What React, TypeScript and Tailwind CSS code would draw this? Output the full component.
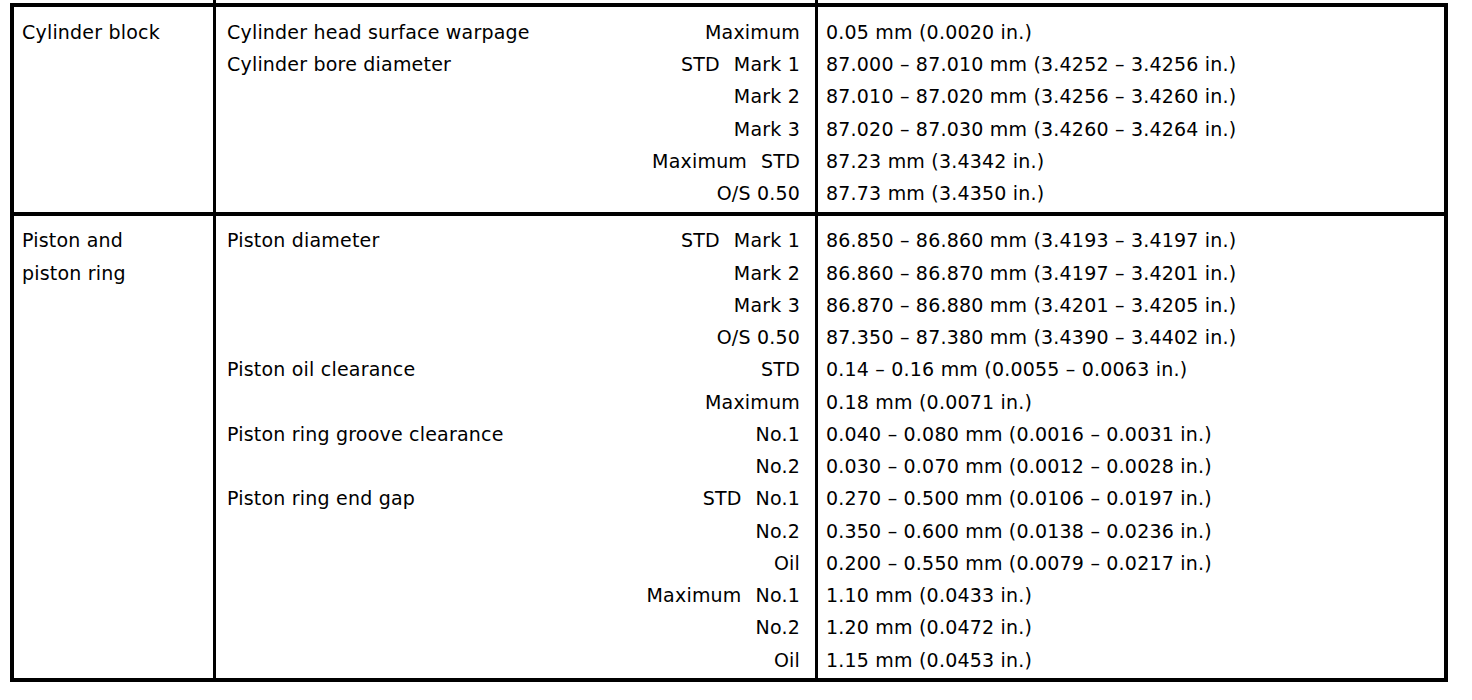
type Row = { item?: string; q: string[]; value: string }

const cylinder: Row[] = [
  { item: 'Cylinder head surface warpage', q: ['Maximum'], value: '0.05 mm (0.0020 in.)' },
  { item: 'Cylinder bore diameter', q: ['STD', 'Mark 1'], value: '87.000 – 87.010 mm (3.4252 – 3.4256 in.)' },
  { q: ['Mark 2'], value: '87.010 – 87.020 mm (3.4256 – 3.4260 in.)' },
  { q: ['Mark 3'], value: '87.020 – 87.030 mm (3.4260 – 3.4264 in.)' },
  { q: ['Maximum', 'STD'], value: '87.23 mm (3.4342 in.)' },
  { q: ['O/S 0.50'], value: '87.73 mm (3.4350 in.)' },
]

const piston: Row[] = [
  { item: 'Piston diameter', q: ['STD', 'Mark 1'], value: '86.850 – 86.860 mm (3.4193 – 3.4197 in.)' },
  { q: ['Mark 2'], value: '86.860 – 86.870 mm (3.4197 – 3.4201 in.)' },
  { q: ['Mark 3'], value: '86.870 – 86.880 mm (3.4201 – 3.4205 in.)' },
  { q: ['O/S 0.50'], value: '87.350 – 87.380 mm (3.4390 – 3.4402 in.)' },
  { item: 'Piston oil clearance', q: ['STD'], value: '0.14 – 0.16 mm (0.0055 – 0.0063 in.)' },
  { q: ['Maximum'], value: '0.18 mm (0.0071 in.)' },
  { item: 'Piston ring groove clearance', q: ['No.1'], value: '0.040 – 0.080 mm (0.0016 – 0.0031 in.)' },
  { q: ['No.2'], value: '0.030 – 0.070 mm (0.0012 – 0.0028 in.)' },
  { item: 'Piston ring end gap', q: ['STD', 'No.1'], value: '0.270 – 0.500 mm (0.0106 – 0.0197 in.)' },
  { q: ['No.2'], value: '0.350 – 0.600 mm (0.0138 – 0.0236 in.)' },
  { q: ['Oil'], value: '0.200 – 0.550 mm (0.0079 – 0.0217 in.)' },
  { q: ['Maximum', 'No.1'], value: '1.10 mm (0.0433 in.)' },
  { q: ['No.2'], value: '1.20 mm (0.0472 in.)' },
  { q: ['Oil'], value: '1.15 mm (0.0453 in.)' },
]

const grid = 'grid grid-cols-[199px_3px_599px_3px_626px]'

function Section({ title, rows, last }: { title: string[]; rows: Row[]; last?: boolean }) {
  return (
    <div className={`${grid} ${last ? '' : 'border-b-4 border-black'}`}>
      <div className="pt-[9px] pb-[2px] pl-[8px]">
        {title.map((t) => (
          <div key={t} className="flex h-[32.25px] items-center">
            {t}
          </div>
        ))}
      </div>
      <div className="bg-black" />
      <div className="pt-[9px] pb-[2px] pl-[11px] pr-[15px]">
        {rows.map((r, i) => (
          <div key={i} className="flex h-[32.25px] items-center justify-between">
            <span>{r.item ?? ''}</span>
            <span className="flex gap-[14px]">
              {r.q.map((q) => (
                <span key={q}>{q}</span>
              ))}
            </span>
          </div>
        ))}
      </div>
      <div className="bg-black" />
      <div className="pt-[9px] pb-[2px] pl-[8px]">
        {rows.map((r, i) => (
          <div key={i} className="flex h-[32.25px] items-center">
            {r.value}
          </div>
        ))}
      </div>
    </div>
  )
}

export default function App() {
  return (
    <div className="h-[700px] w-[1472px] bg-white pl-[10px] text-[19px] tracking-[0.2px] text-black [font-family:'DejaVu_Sans',sans-serif]">
      <div className="w-[1438px]">
        {/* cut-off rule lines from the previous page */}
        <div className={`${grid} h-[3px] px-[4px]`}>
          <div />
          <div className="bg-black" />
          <div />
          <div className="bg-black" />
          <div />
        </div>
        <div className="border-x-4 border-y-4 border-black">
          <Section title={['Cylinder block']} rows={cylinder} />
          <Section title={['Piston and', 'piston ring']} rows={piston} last />
        </div>
      </div>
    </div>
  )
}
